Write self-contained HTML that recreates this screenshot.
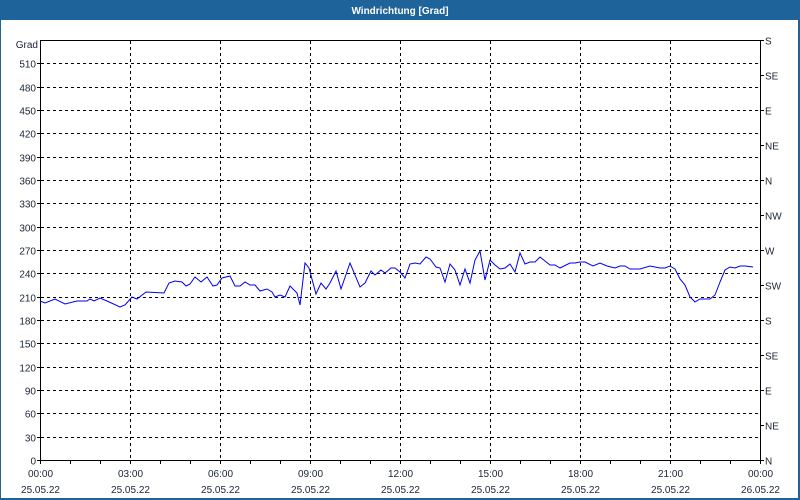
<!DOCTYPE html>
<html><head><meta charset="utf-8"><style>
html,body{margin:0;padding:0;background:#fff;}
body{width:800px;height:500px;overflow:hidden;}
svg{display:block;}
text{font-family:"Liberation Sans",sans-serif;font-size:10px;fill:#1b2536;}
</style></head><body>
<svg width="800" height="500" viewBox="0 0 800 500" xmlns="http://www.w3.org/2000/svg">
<rect x="0" y="0" width="800" height="500" fill="#fff"/>
<rect x="0" y="0" width="800" height="20" fill="#1e6399"/>
<rect x="0" y="0" width="1" height="500" fill="#1e6399"/>
<rect x="798" y="0" width="2" height="500" fill="#1e6399"/>
<rect x="0" y="498" width="800" height="2" fill="#1e6399"/>
<text x="400" y="14" text-anchor="middle" style="fill:#fff;font-weight:bold;font-size:10px">Windrichtung [Grad]</text>
<g stroke="#000" stroke-width="1" stroke-dasharray="3,3" fill="none" shape-rendering="crispEdges" id="grid"></g>
<g id="labels"></g>
<rect x="40.5" y="40.5" width="720" height="420" fill="none" stroke="#000" stroke-width="1" shape-rendering="crispEdges"/>
<polyline fill="none" stroke="#0000ee" stroke-width="1" points="40,301 45,303 55,299 65,304 77,301 87,301 90,299 94,301 100,298 107,301 120,307 125,305 132,297 137,299 146,292 164,293 169,283 175,281 182,282 186,286 190,284 195,277 201,282 207,277 213,286 217,285 222,278 230,276 235,286 240,286 245,282 250,285 255,285 260,291 267,289 272,292 275,297 280,295 285,297 290,286 297,293 300,305 305,263 309,268 316,294 321,283 326,289 330,283 336,271 341,289 350,263 360,287 365,283 371,271 375,275 381,270 385,273 391,268 395,268 400,272 405,278 410,264 415,263 420,264 426,257 430,259 436,267 440,268 445,282 450,264 455,270 460,285 465,269 470,283 475,260 480,251 485,280 490,260 495,265 500,269 505,268 510,264 515,272 520,253 525,264 530,262 535,262 540,257 550,265 555,265 560,268 570,263 575,263 580,262 585,262 593,266 600,263 607,266 615,268 620,266 625,266 630,269 640,269 650,266 655,267 660,268 665,268 670,266 675,269 680,279 685,285 690,297 695,302 700,299 705,299 710,299 715,295 720,282 725,270 730,267 735,268 740,266 745,266 753,267"/>
<script>
var ns="http://www.w3.org/2000/svg",g=document.getElementById("grid"),L=document.getElementById("labels");
function el(p,t,a,txt){var e=document.createElementNS(ns,t);for(var k in a)e.setAttribute(k,a[k]);if(txt)e.textContent=txt;p.appendChild(e);return e;}
var dirs=["N","NE","E","SE","S","SW","W","NW","N","NE","E","SE","S"];
for(var v=0;v<=510;v+=30){var y=Math.round(460-v*420/540)+0.5;
 if(v>0)el(g,"line",{x1:41,y1:y,x2:760,y2:y});
 el(L,"line",{x1:37,y1:y,x2:40,y2:y,stroke:"#000","shape-rendering":"crispEdges"});
 el(L,"text",{x:36,y:y+4,"text-anchor":"end"},String(v));}
el(L,"text",{x:38,y:48,"text-anchor":"end"},"Grad");
for(var i=0;i<13;i++){var y=Math.round(460-i*35)+0.5;
 el(L,"line",{x1:760,y1:y,x2:764,y2:y,stroke:"#000","shape-rendering":"crispEdges"});
 el(L,"text",{x:765,y:y+4},dirs[i]);}
for(var h=0;h<=24;h++){var x=40+h*30+0.5;
 el(L,"line",{x1:x,y1:460,x2:x,y2:464,stroke:"#000","shape-rendering":"crispEdges"});
 if(h%3==0){ if(h>0&&h<24)el(g,"line",{x1:x,y1:41,x2:x,y2:460});
  var hh=(h%24<10?"0":"")+(h%24)+":00";
  el(L,"text",{x:x,y:477,"text-anchor":"middle"},hh);
  el(L,"text",{x:x,y:493,"text-anchor":"middle"},h==24?"26.05.22":"25.05.22");}}
</script>
</svg>
</body></html>
